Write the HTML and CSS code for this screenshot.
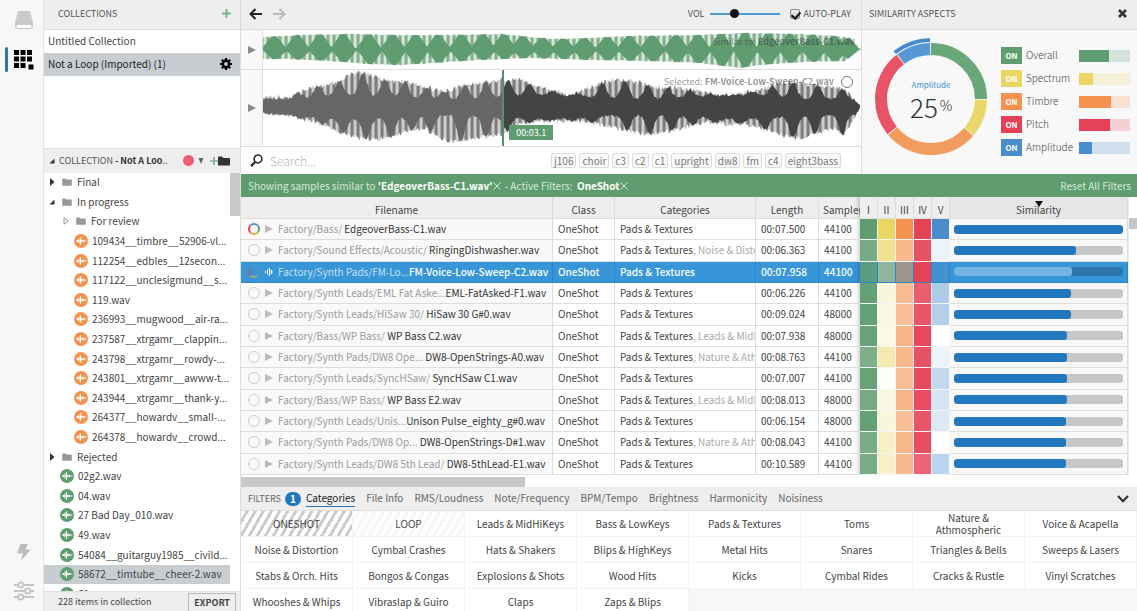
FILE: index.html
```
<!DOCTYPE html>
<html lang="en">
<head>
<meta charset="utf-8">
<title>Sample Browser</title>
<link rel="stylesheet" href="styles.css">
</head>
<body>
<svg class="defs" aria-hidden="true">
  <symbol id="folder" viewBox="0 0 12 10"><path d="M0 1.2Q0 .5.8.5H4L5.2 2H11.2Q12 2 12 2.8V9Q12 9.6 11.2 9.6H.8Q0 9.6 0 9Z"/></symbol>
  <symbol id="wave" viewBox="0 0 14 14"><circle cx="7" cy="7" r="7"/><path d="M2 7H12.4M3.500 6V8M5 4.500V9.500M6.500 3.200V10.800M8 5.500V8.500M9.500 6.200V7.800" stroke="#fff" stroke-width="1" fill="none"/></symbol>
  <symbol id="play" viewBox="0 0 8 8"><path d="M0 0L8 4L0 8Z"/></symbol>
  <symbol id="closed" viewBox="0 0 6 8"><path d="M1 0L5.5 4L1 8Z"/></symbol>
  <symbol id="open" viewBox="0 0 6 6"><path d="M5.5 .5V5.5H.5Z"/></symbol>
  <symbol id="hollow" viewBox="0 0 6 8"><path d="M1 .8L5.2 4L1 7.2Z" fill="none" stroke="#777" stroke-width=".8"/></symbol>
</svg>
<div class="app">
  <nav class="rail" aria-label="Views">
    <div class="rail-group">
      <button class="rail-btn" aria-label="Drive"><svg width="20" height="20" viewBox="0 0 20 20"><path d="M4 1H16L19 13V17Q19 19 17 19H3Q1 19 1 17V13Z" fill="#c9c9c9"/><rect x="2.6" y="15" width="14.8" height="3" rx="1" fill="#fff"/></svg></button>
      <button class="rail-btn active" aria-label="Grid"><svg width="21" height="21" viewBox="0 0 21 21"><path d="M1 1h5v5h-5zM7.500 1h5v5h-5zM14 1h5v5h-5zM1 7.500h5v5h-5zM7.500 7.500h5v5h-5zM14 7.500h5v5h-5zM1 14h5v5h-5zM7.500 14h5v5h-5zM15.500 15.500h5v5h-5z" fill="#000"/></svg></button>
    </div>
    <div class="rail-group">
      <button class="rail-btn" aria-label="Quick actions"><svg width="16" height="18" viewBox="0 0 16 18"><path d="M4.500 1H12L9.500 6.500H15L5 17.500L7 10.500H1Z" fill="#bdbdbd"/></svg></button>
      <button class="rail-btn" aria-label="Settings"><svg width="20" height="20" viewBox="0 0 20 20" fill="none" stroke="#c4c4c4" stroke-width="1.800"><path d="M0 4H4M9.500 4H20M0 10H11M16.500 10H20M0 16H4M9.500 16H20"/><circle cx="6.700" cy="4" r="2.600"/><circle cx="13.700" cy="10" r="2.600"/><circle cx="6.700" cy="16" r="2.600"/></svg></button>
    </div>
  </nav>

  <aside class="sidebar">
    <header class="bar side-head"><h2>COLLECTIONS</h2><button class="plus" aria-label="Add collection"><svg width="9" height="9" viewBox="0 0 9 9"><path d="M4.500 0V9M0 4.500H9" stroke="#7fb08c" stroke-width="2"/></svg></button></header>
    <ul class="collections">
      <li><button>Untitled Collection</button></li>
      <li class="selected"><button>Not a Loop (Imported) (1)</button><svg width="12" height="12" viewBox="0 0 12 12"><circle cx="6" cy="6" r="3.200" fill="none" stroke="#000" stroke-width="2.600"/><path d="M6 0V2.500M6 9.500V12M0 6H2.500M9.500 6H12M1.800 1.800L3.300 3.300M8.700 8.700L10.200 10.200M1.800 10.200L3.300 8.700M8.700 3.300L10.200 1.800" stroke="#000" stroke-width="2.200"/></svg></li>
    </ul>
    <header class="bar coll-head">
      <svg width="6" height="6" fill="#333"><use href="#open"/></svg>
      <h2>COLLECTION <b>- Not A Loo</b>..</h2>
      <span class="dot"></span>
      <svg class="down" width="6" height="6" viewBox="0 0 6 6"><path d="M.5 0H5.500L3 6Z" fill="#666"/></svg>
      <button class="add-folder" aria-label="Add folder"><svg width="8" height="8" viewBox="0 0 9 9"><path d="M4.500 0V9M0 4.500H9" stroke="#7fb08c" stroke-width="1.800"/></svg><svg width="12" height="10" fill="#333"><use href="#folder"/></svg></button>
    </header>
    <div class="tree-wrap">
      <ul class="tree">
        <li class="dir"><svg class="tw"><use href="#closed"/></svg><svg class="fo"><use href="#folder"/></svg><span>Final</span></li>
        <li class="dir"><svg class="tw"><use href="#open"/></svg><svg class="fo"><use href="#folder"/></svg><span>In progress</span></li>
        <li class="dir sub"><svg class="tw"><use href="#hollow"/></svg><svg class="fo"><use href="#folder"/></svg><span>For review</span></li>
        <li class="file sub orange"><svg class="wv"><use href="#wave"/></svg><span>109434__timbre__52906-vl...</span></li>
        <li class="file sub orange"><svg class="wv"><use href="#wave"/></svg><span>112254__edbles__12secon...</span></li>
        <li class="file sub orange"><svg class="wv"><use href="#wave"/></svg><span>117122__unclesigmund__s...</span></li>
        <li class="file sub orange"><svg class="wv"><use href="#wave"/></svg><span>119.wav</span></li>
        <li class="file sub orange"><svg class="wv"><use href="#wave"/></svg><span>236993__mugwood__air-ra...</span></li>
        <li class="file sub orange"><svg class="wv"><use href="#wave"/></svg><span>237587__xtrgamr__clappin...</span></li>
        <li class="file sub orange"><svg class="wv"><use href="#wave"/></svg><span>243798__xtrgamr__rowdy-...</span></li>
        <li class="file sub orange"><svg class="wv"><use href="#wave"/></svg><span>243801__xtrgamr__awww-t...</span></li>
        <li class="file sub orange"><svg class="wv"><use href="#wave"/></svg><span>243944__xtrgamr__thank-y...</span></li>
        <li class="file sub orange"><svg class="wv"><use href="#wave"/></svg><span>264377__howardv__small-...</span></li>
        <li class="file sub orange"><svg class="wv"><use href="#wave"/></svg><span>264378__howardv__crowd...</span></li>
        <li class="dir"><svg class="tw"><use href="#closed"/></svg><svg class="fo"><use href="#folder"/></svg><span>Rejected</span></li>
        <li class="file"><svg class="wv"><use href="#wave"/></svg><span>02g2.wav</span></li>
        <li class="file"><svg class="wv"><use href="#wave"/></svg><span>04.wav</span></li>
        <li class="file"><svg class="wv"><use href="#wave"/></svg><span>27 Bad Day_010.wav</span></li>
        <li class="file"><svg class="wv"><use href="#wave"/></svg><span>49.wav</span></li>
        <li class="file"><svg class="wv"><use href="#wave"/></svg><span>54084__guitarguy1985__civild...</span></li>
        <li class="file selected"><svg class="wv"><use href="#wave"/></svg><span>58672__timtube__cheer-2.wav</span></li>
        <li class="file"><svg class="wv"><use href="#wave"/></svg><span>61.wav</span></li>
      </ul>
      <div class="vthumb"></div>
    </div>
    <footer class="side-foot"><span>228 items in collection</span><button>EXPORT</button></footer>
  </aside>

  <main class="main">
    <div class="top">
      <section class="player">
        <header class="bar player-head">
          <button aria-label="Back"><svg width="13" height="12" viewBox="0 0 13 12" fill="none" stroke="#222" stroke-width="2"><path d="M13 6H2M6.500 1L1.500 6L6.500 11"/></svg></button>
          <button aria-label="Forward"><svg width="13" height="12" viewBox="0 0 13 12" fill="none" stroke="#bbb" stroke-width="2"><path d="M0 6H11M6.500 1L11.500 6L6.500 11"/></svg></button>
          <div class="player-opts">
            <label for="vol">VOL</label><input id="vol" class="vol" type="range" min="0" max="100" value="34">
            <input id="auto" class="check" type="checkbox" checked><label for="auto">AUTO-PLAY</label>
          </div>
        </header>
        <div class="track small">
          <button class="play" aria-label="Play similar"><svg width="8" height="8" fill="#8a8a8a"><use href="#play"/></svg></button>
          <div class="wavebox">
            <svg id="wave-a" class="waveform" viewBox="263 30 598 39" preserveAspectRatio="none"></svg>
            <p class="caption">Similar to: <b>EdgeoverBass-C1.wav</b></p>
          </div>
        </div>
        <div class="track large">
          <button class="play" aria-label="Play selected"><svg width="8" height="8" fill="#8a8a8a"><use href="#play"/></svg></button>
          <div class="wavebox">
            <svg id="wave-b" class="waveform" viewBox="263 70 598 77" preserveAspectRatio="none"></svg>
            <p class="caption">Selected: <b>FM-Voice-Low-Sweep-C2.wav</b><i class="ring"></i></p>
            <div class="playhead" style="left:40%"><span>00:03.1</span></div>
          </div>
        </div>
        <div class="search">
          <svg width="13" height="13" viewBox="0 0 13 13" fill="none" stroke="#333" stroke-width="1.700"><circle cx="8" cy="4.900" r="3.900"/><path d="M5.200 7.900L1 12.200" stroke-width="2.400"/></svg>
          <input type="text" aria-label="Search" placeholder="Search...">
          <div class="tags"><button>j106</button><button>choir</button><button>c3</button><button>c2</button><button>c1</button><button>upright</button><button>dw8</button><button>fm</button><button>c4</button><button>eight3bass</button></div>
        </div>
      </section>
      <section class="aspects">
        <header class="bar aspects-head"><h2>SIMILARITY ASPECTS</h2><button aria-label="Close"><svg width="9" height="9" viewBox="0 0 9 9"><path d="M1 1L8 8M8 1L1 8" stroke="#333" stroke-width="2.600"/></svg></button></header>
        <div class="aspects-body">
          <svg class="donut" viewBox="0 0 126 126">
            <g fill="none" stroke-width="12">
              <circle class="seg" cx="62" cy="63" r="50" stroke="#6aa879" pathLength="360" stroke-dasharray="90 270"/>
              <circle class="seg" cx="62" cy="63" r="50" stroke="#ead76a" pathLength="360" stroke-dasharray="39 321" stroke-dashoffset="-91"/>
              <circle class="seg" cx="62" cy="63" r="50" stroke="#f39c60" pathLength="360" stroke-dasharray="99 261" stroke-dashoffset="-131"/>
              <circle class="seg" cx="62" cy="63" r="50" stroke="#e85367" pathLength="360" stroke-dasharray="91 269" stroke-dashoffset="-231"/>
              <circle class="seg" cx="62" cy="63" r="50" stroke="#5697d6" pathLength="360" stroke-dasharray="36 324" stroke-dashoffset="-323"/>
              <circle class="seg" cx="62" cy="63" r="59" stroke="#478bca" stroke-width="4" pathLength="360" stroke-dasharray="37 323" stroke-dashoffset="-322"/>
            </g>
            <text class="d-name" x="62" y="52" text-anchor="middle">Amplitude</text>
            <text class="d-num" x="41" y="82">25<tspan class="d-pct" dx="2" dy="-7">%</tspan></text>
          </svg>
          <ul class="aspect-list">
            <li class="c1"><button>ON</button><span>Overall</span><div class="meter"><div style="width:59%"></div></div></li>
            <li class="c2"><button>ON</button><span>Spectrum</span><div class="meter"><div style="width:28%"></div></div></li>
            <li class="c3"><button>ON</button><span>Timbre</span><div class="meter"><div style="width:62%"></div></div></li>
            <li class="c4"><button>ON</button><span>Pitch</span><div class="meter"><div style="width:61%"></div></div></li>
            <li class="c5"><button>ON</button><span>Amplitude</span><div class="meter"><div style="width:25%"></div></div></li>
          </ul>
        </div>
      </section>
    </div>

    <div class="status"><p>Showing samples similar to <b>'EdgeoverBass-C1.wav'</b><button aria-label="Clear similarity"><svg width="8" height="8" viewBox="0 0 8 8"><path d="M.5.5L7.500 7.500M7.500.5L.5 7.500"/></svg></button> - Active Filters: &nbsp;<b>OneShot</b><button aria-label="Clear filter"><svg width="8" height="8" viewBox="0 0 8 8"><path d="M.5.5L7.500 7.500M7.500.5L.5 7.500"/></svg></button></p><button>Reset All Filters</button></div>

    <div class="results">
      <div class="table-row">
      <table class="grid">
        <colgroup><col class="w-name"><col class="w-class"><col><col class="w-len"><col class="w-rate"><col class="w-a"><col class="w-a"><col class="w-a"><col class="w-a"><col class="w-a"><col class="w-sim"></colgroup>
        <thead><tr><th>Filename</th><th>Class</th><th>Categories</th><th>Length</th><th class="rate">Sampler</th><th>I</th><th>II</th><th>III</th><th>IV</th><th>V</th><th class="sorted">Similarity<svg width="8" height="6" viewBox="0 0 8 6"><path d="M0 0H8L4 6Z" fill="#111"/></svg></th></tr></thead>
        <tbody>
          <tr><td><div class="name"><i class="ring multi"></i><svg><use href="#play"/></svg><span>Factory/Bass/&nbsp;</span><strong>EdgeoverBass-C1.wav</strong></div></td><td>OneShot</td><td>Pads &amp; Textures</td><td>00:07.500</td><td class="rate">44100</td><td class="h1" style="--v:1"></td><td class="h2" style="--v:1"></td><td class="h3" style="--v:1"></td><td class="h4" style="--v:1"></td><td class="h5" style="--v:1"></td><td class="sim"><div class="score"><div style="width:100%"></div></div></td></tr>
          <tr><td><div class="name"><i class="ring"></i><svg><use href="#play"/></svg><span>Factory/Sound Effects/Acoustic/&nbsp;</span><strong>RingingDishwasher.wav</strong></div></td><td>OneShot</td><td>Pads &amp; Textures<em>, Noise &amp; Distortion</em></td><td>00:06.363</td><td class="rate">44100</td><td class="h1" style="--v:.86"></td><td class="h2" style="--v:.7"></td><td class="h3" style="--v:.66"></td><td class="h4" style="--v:.92"></td><td class="h5" style="--v:.1"></td><td class="sim"><div class="score"><div style="width:72%"></div></div></td></tr>
          <tr class="current"><td><div class="name"><i class="ring multi"></i><svg class="playing" viewBox="0 0 8 8"><path d="M.5 3V5M2.500 1.500V6.500M4.500 0V8M6.500 2V6M8 3.500V4.500" stroke="#fff" stroke-width="1.200"/></svg><span>Factory/Synth Pads/FM-Lo...</span><strong>FM-Voice-Low-Sweep-C2.wav</strong></div></td><td>OneShot</td><td>Pads &amp; Textures</td><td>00:07.958</td><td class="rate">44100</td><td class="h1" style="--v:.85"></td><td class="h2" style="--v:.5"></td><td class="h3" style="--v:.55"></td><td class="h4" style="--v:1"></td><td class="h5" style="--v:.6"></td><td class="sim"><div class="score"><div style="width:70%"></div></div></td></tr>
          <tr><td><div class="name"><i class="ring"></i><svg><use href="#play"/></svg><span>Factory/Synth Leads/EML Fat Aske...</span><strong>EML-FatAsked-F1.wav</strong></div></td><td>OneShot</td><td>Pads &amp; Textures</td><td>00:06.226</td><td class="rate">44100</td><td class="h1" style="--v:.96"></td><td class="h2" style="--v:.22"></td><td class="h3" style="--v:.62"></td><td class="h4" style="--v:.86"></td><td class="h5" style="--v:.45"></td><td class="sim"><div class="score"><div style="width:69%"></div></div></td></tr>
          <tr><td><div class="name"><i class="ring"></i><svg><use href="#play"/></svg><span>Factory/Synth Leads/HiSaw 30/&nbsp;</span><strong>HiSaw 30 G#0.wav</strong></div></td><td>OneShot</td><td>Pads &amp; Textures</td><td>00:09.024</td><td class="rate">48000</td><td class="h1" style="--v:.96"></td><td class="h2" style="--v:.2"></td><td class="h3" style="--v:.58"></td><td class="h4" style="--v:.9"></td><td class="h5" style="--v:.42"></td><td class="sim"><div class="score"><div style="width:69%"></div></div></td></tr>
          <tr><td><div class="name"><i class="ring"></i><svg><use href="#play"/></svg><span>Factory/Bass/WP Bass/&nbsp;</span><strong>WP Bass C2.wav</strong></div></td><td>OneShot</td><td>Pads &amp; Textures<em>, Leads &amp; MidHiKeys</em></td><td>00:07.938</td><td class="rate">48000</td><td class="h1" style="--v:.94"></td><td class="h2" style="--v:.18"></td><td class="h3" style="--v:.68"></td><td class="h4" style="--v:.97"></td><td class="h5" style="--v:0"></td><td class="sim"><div class="score"><div style="width:67%"></div></div></td></tr>
          <tr><td><div class="name"><i class="ring"></i><svg><use href="#play"/></svg><span>Factory/Synth Pads/DW8 Ope...&nbsp;</span><strong>DW8-OpenStrings-A0.wav</strong></div></td><td>OneShot</td><td>Pads &amp; Textures<em>, Nature &amp; Athmospheric</em></td><td>00:08.763</td><td class="rate">44100</td><td class="h1" style="--v:.82"></td><td class="h2" style="--v:.5"></td><td class="h3" style="--v:.66"></td><td class="h4" style="--v:.92"></td><td class="h5" style="--v:.1"></td><td class="sim"><div class="score"><div style="width:67%"></div></div></td></tr>
          <tr><td><div class="name"><i class="ring"></i><svg><use href="#play"/></svg><span>Factory/Synth Leads/SyncHSaw/&nbsp;</span><strong>SyncHSaw C1.wav</strong></div></td><td>OneShot</td><td>Pads &amp; Textures</td><td>00:07.007</td><td class="rate">44100</td><td class="h1" style="--v:.94"></td><td class="h2" style="--v:.03"></td><td class="h3" style="--v:.6"></td><td class="h4" style="--v:.96"></td><td class="h5" style="--v:.34"></td><td class="sim"><div class="score"><div style="width:67%"></div></div></td></tr>
          <tr><td><div class="name"><i class="ring"></i><svg><use href="#play"/></svg><span>Factory/Bass/WP Bass/&nbsp;</span><strong>WP Bass E2.wav</strong></div></td><td>OneShot</td><td>Pads &amp; Textures<em>, Leads &amp; MidHiKeys</em></td><td>00:08.013</td><td class="rate">48000</td><td class="h1" style="--v:.86"></td><td class="h2" style="--v:.2"></td><td class="h3" style="--v:.68"></td><td class="h4" style="--v:.95"></td><td class="h5" style="--v:.24"></td><td class="sim"><div class="score"><div style="width:67%"></div></div></td></tr>
          <tr><td><div class="name"><i class="ring"></i><svg><use href="#play"/></svg><span>Factory/Synth Leads/Unis...</span><strong>Unison Pulse_eighty_g#0.wav</strong></div></td><td>OneShot</td><td>Pads &amp; Textures</td><td>00:06.154</td><td class="rate">48000</td><td class="h1" style="--v:.96"></td><td class="h2" style="--v:.22"></td><td class="h3" style="--v:.58"></td><td class="h4" style="--v:.9"></td><td class="h5" style="--v:.2"></td><td class="sim"><div class="score"><div style="width:66%"></div></div></td></tr>
          <tr><td><div class="name"><i class="ring"></i><svg><use href="#play"/></svg><span>Factory/Synth Pads/DW8 Op...&nbsp;</span><strong>DW8-OpenStrings-D#1.wav</strong></div></td><td>OneShot</td><td>Pads &amp; Textures<em>, Nature &amp; Athmospheric</em></td><td>00:08.043</td><td class="rate">44100</td><td class="h1" style="--v:.84"></td><td class="h2" style="--v:.35"></td><td class="h3" style="--v:.66"></td><td class="h4" style="--v:.95"></td><td class="h5" style="--v:0"></td><td class="sim"><div class="score"><div style="width:66%"></div></div></td></tr>
          <tr><td><div class="name"><i class="ring"></i><svg><use href="#play"/></svg><span>Factory/Synth Leads/DW8 5th Lead/&nbsp;</span><strong>DW8-5thLead-E1.wav</strong></div></td><td>OneShot</td><td>Pads &amp; Textures</td><td>00:10.589</td><td class="rate">44100</td><td class="h1" style="--v:.84"></td><td class="h2" style="--v:.35"></td><td class="h3" style="--v:.64"></td><td class="h4" style="--v:.82"></td><td class="h5" style="--v:.38"></td><td class="sim"><div class="score"><div style="width:66%"></div></div></td></tr>
        </tbody>
      </table>
      <div class="vscroll"><div></div></div>
      </div>
      <div class="hscroll"><div></div></div>
    </div>

    <section class="filters">
      <header class="filter-head"><span>FILTERS</span><span class="badge">1</span>
        <nav><button class="on">Categories</button><button>File Info</button><button>RMS/Loudness</button><button>Note/Frequency</button><button>BPM/Tempo</button><button>Brightness</button><button>Harmonicity</button><button>Noisiness</button></nav>
        <button class="collapse" aria-label="Collapse"><svg width="12" height="8" viewBox="0 0 12 8"><path d="M1 1L6 6.200L11 1" fill="none" stroke="#333" stroke-width="2.200"/></svg></button>
      </header>
      <div class="cells">
        <button class="striped">ONESHOT</button><button class="striped faint">LOOP</button><button>Leads &amp; MidHiKeys</button><button>Bass &amp; LowKeys</button><button>Pads &amp; Textures</button><button>Toms</button><button>Nature &amp; Athmospheric</button><button>Voice &amp; Acapella</button>
        <button>Noise &amp; Distortion</button><button>Cymbal Crashes</button><button>Hats &amp; Shakers</button><button>Blips &amp; HighKeys</button><button>Metal Hits</button><button>Snares</button><button>Triangles &amp; Bells</button><button>Sweeps &amp; Lasers</button>
        <button>Stabs &amp; Orch. Hits</button><button>Bongos &amp; Congas</button><button>Explosions &amp; Shots</button><button>Wood Hits</button><button>Kicks</button><button>Cymbal Rides</button><button>Cracks &amp; Rustle</button><button>Vinyl Scratches</button>
        <button>Whooshes &amp; Whips</button><button>Vibraslap &amp; Guiro</button><button>Claps</button><button>Zaps &amp; Blips</button>
      </div>
    </section>
  </main>
</div>
<script src="waves.js"></script>
</body>
</html>
```
FILE: waves.js
```
// Builds the two waveform drawings from envelope key points and beat peaks.
function lerp(points, x) {
  for (let i = 1; i < points.length; i++) {
    if (x <= points[i][0]) {
      const [x0, y0] = points[i - 1], [x1, y1] = points[i];
      return y0 + (y1 - y0) * (x - x0) / (x1 - x0);
    }
  }
  return points[points.length - 1][1];
}
function noise(x) {
  const s = Math.sin(x * 127.1) * 43758.5453;
  return s - Math.floor(s);
}
function outline(from, to, top, bottom) {
  const up = [], down = [];
  for (let x = from; x <= to; x++) {
    up.push(x + ',' + top(x).toFixed(1));
    down.unshift(x + ',' + bottom(x).toFixed(1));
  }
  return up.concat(down).join(' ');
}
function stripes(id, light, dark, width) {
  return `<linearGradient id="${id}" gradientUnits="userSpaceOnUse" x1="0" x2="${width}" y1="0" y2="0" spreadMethod="repeat"><stop offset="0" stop-color="${light}"/><stop offset=".35" stop-color="${light}"/><stop offset=".5" stop-color="${dark}"/><stop offset=".85" stop-color="${dark}"/><stop offset="1" stop-color="${light}"/></linearGradient>`;
}
function nearest(peaks, x) {
  return Math.min(...peaks.map(p => Math.abs(x - p)));
}

const aTop = [[263,37],[300,35],[350,34],[400,35],[450,35],[500,34],[530,37],[555,39],[590,38],[630,36],[700,35],[740,33],[800,34],[835,36],[850,38],[861,49]];
const aBot = [[263,59],[290,59],[330,61],[370,64],[400,65],[430,63],[480,60],[530,58],[590,60],[650,61],[700,63],[740,68],[760,65],[800,62],[845,61],[861,49]];
const aPeaks = [274,297,320,343,369,393,416,438,461,483,504,523,543,563,584,607,629,652,676,698,721,745,768,790,813,834,850];
const aC = 49.5;
const aLobe = x => Math.min(1, Math.max(.1, 1.25 - nearest(aPeaks, x) / 10.5));
const aEdge = x => (noise(x) - .5) * 1.2;
document.getElementById('wave-a').innerHTML =
  stripes('sa', '#cfecd6', '#8aa892', 6) +
  `<polygon fill="url(#sa)" points="${outline(263, 861, x => lerp(aTop, x) + aEdge(x), x => lerp(aBot, x) + aEdge(x + 9))}"/>` +
  `<polygon fill="#5f9d70" points="${outline(263, 861, x => aC - (aC - lerp(aTop, x)) * aLobe(x), x => aC + (lerp(aBot, x) - aC) * aLobe(x - 1))}"/>`;

const bTop = [[263,98],[290,97],[310,88],[335,83],[350,75],[360,72],[375,76],[390,82],[405,81],[425,87],[444,92],[465,85],[490,82],[502,80],[520,80],[535,86],[553,91],[570,96],[590,88],[605,82],[620,80],[640,83],[660,88],[680,88],[700,92],[720,96],[740,94],[760,90],[780,84],[800,83],[820,86],[840,88],[850,94],[861,107]];
const bBot = [[263,114],[285,115],[300,119],[320,124],[335,131],[350,137],[370,140],[390,139],[405,132],[425,129],[440,139],[455,143],[475,139],[500,136],[520,125],[540,122],[570,122],[590,123],[605,127],[625,131],[645,135],[670,132],[690,127],[710,123],[725,125],[745,125],[760,129],[785,137],[800,139],[820,133],[835,129],[843,137],[850,125],[861,107]];
const bUp = [297,318,339,363,385,405,427,444,465,486,508,530,553,575,602,625,648,668,690,713,733,752,772,793,818,843];
const bDown = [278,300,322,343,366,391,412,430,461,486,508,530,550,572,592,627,650,672,693,715,740,765,793,815,842];
const bC = 107.5;
const bBase = x => Math.min(12, 8 + 4 * Math.sin((x - 263) / 190 * Math.PI) ** 2);
function spike(peaks, env, x) {
  const d = nearest(peaks, x);
  const base = Math.min(env, bBase(x));
  return base + (env - base) * Math.exp(-((d / 5.5) ** 2));
}
const bEdge = x => (noise(x) - .5) * 5;
const inner = (from, to) => outline(from, to,
  x => bC - spike(bUp, bC - lerp(bTop, x), x) + bEdge(x) * .5,
  x => bC + spike(bDown, lerp(bBot, x) - bC, x) + bEdge(x + 7) * .5);
document.getElementById('wave-b').innerHTML =
  stripes('sb', '#cdcdcd', '#7c7c7c', 6) +
  `<polygon fill="url(#sb)" points="${outline(263, 860, x => lerp(bTop, x) + bEdge(x), x => lerp(bBot, x) + bEdge(x + 3))}"/>` +
  `<polygon fill="#666" points="${inner(263, 503)}"/><polygon fill="#444" points="${inner(503, 860)}"/>`;
```
FILE: styles.css
```
* { box-sizing: border-box; }
body { margin: 0; font: 10px/16px "Noto Sans CJK SC", "Open Sans", sans-serif; color: #444; background: #fff; }
button { font: inherit; color: inherit; background: none; border: 0; padding: 0; margin: 0; display: inline-flex; align-items: center; }
ul { list-style: none; margin: 0; padding: 0; }
h2 { font: inherit; margin: 0; white-space: nowrap; }
p { margin: 0; }
svg { flex: none; }
.defs { position: absolute; width: 0; height: 0; }

.app { display: grid; grid-template-columns: 44px 197px 1fr; height: 100vh; overflow: hidden; }
.bar { display: flex; align-items: center; background: #eee; border-bottom: 1px solid #ddd; color: #555; font-size: 9px; }

.rail { background: #f7f7f7; border-right: 1px solid #e6e6e6; display: flex; flex-direction: column; justify-content: space-between; padding: 8px 0; }
.rail-group { display: flex; flex-direction: column; gap: 15px; }
.rail-btn { width: 100%; height: 24px; justify-content: center; padding-left: 4px; }
.rail-btn.active { position: relative; }
.rail-btn.active::before { content: ""; position: absolute; left: 5px; top: 0; width: 3px; height: 25px; border-radius: 2px; background: #2777b8; }

.sidebar { display: flex; flex-direction: column; min-height: 0; border-right: 1px solid #ddd; }
.side-head { height: 30px; padding: 0 9px 2px 14px; justify-content: space-between; }
.collections { height: 118px; }
.collections li { height: 23px; display: flex; align-items: center; justify-content: space-between; padding: 0 8px 1px 4px; }
.collections .selected { background: #c8cdd2; color: #222; }
.coll-head { height: 25px; padding: 0 10px 1px 5px; border-top: 1px solid #ddd; border-bottom: 0; }
.coll-head h2 { margin-left: 4px; flex: 1; }
.coll-head b { color: #333; }
.dot { width: 11px; height: 11px; border-radius: 50%; background: #ef5d73; margin-right: 4px; }
.down { margin-right: 6px; }
.tree-wrap { flex: 1; min-height: 0; overflow: hidden; display: flex; align-items: flex-start; }
.tree { flex: 1; min-width: 0; height: calc(100% + 13px); display: grid; grid-auto-rows: 1fr; }
.tree li { display: flex; align-items: center; padding: 0 0 1px 5px; white-space: nowrap; overflow: hidden; }
.tree .sub { padding-left: 19px; }
.tree .file { padding-left: 16px; }
.tree .file.sub { padding-left: 30px; }
.tree .selected { background: #c8cdd2; }
.tw { width: 6px; height: 8px; fill: #333; margin-right: 7px; }
.fo { width: 10px; height: 8px; fill: #999; margin-right: 5px; }
.wv { width: 14px; height: 14px; fill: #5f9d70; margin-right: 4px; }
.orange .wv { fill: #f3934f; }
.vthumb { width: 10px; height: 43px; background: #c8c8c8; }
.side-foot { height: 20px; background: #eee; border-top: 1px solid #ddd; display: flex; align-items: center; justify-content: space-between; padding: 0 4px 0 14px; font-size: 9px; position: relative; }
.side-foot button { border: 1px solid #bbb; border-bottom: 0; height: 18px; padding: 0 5px; font-weight: bold; align-self: flex-end; }

.main { display: flex; flex-direction: column; min-width: 0; min-height: 0; }
.top { display: grid; grid-template-columns: minmax(0, 1fr) 276px; height: 174px; flex: none; }
.player { display: flex; flex-direction: column; min-width: 0; }
.player-head { height: 30px; padding: 0 10px 2px 8px; gap: 11px; }
.player-opts { margin-left: auto; display: flex; align-items: center; }
.vol { appearance: none; width: 70px; height: 12px; margin: 0 10px 0 5px; background: linear-gradient(#4a9bd6, #4a9bd6) center / 100% 2px no-repeat; }
.vol::-webkit-slider-thumb { appearance: none; width: 9px; height: 9px; border-radius: 50%; background: #111; }
.check { appearance: none; width: 10px; height: 10px; margin: 0 4px 0 0; border: 1px solid #888; border-radius: 2px; background: linear-gradient(#eee, #ccc); position: relative; }
.check:checked::after { content: ""; position: absolute; left: 2px; top: 0; width: 4px; height: 7px; border: solid #111; border-width: 0 2px 2px 0; rotate: 40deg; }
.track { display: flex; border-bottom: 1px solid #ddd; }
.small { height: 40px; }
.large { height: 77px; }
.play { width: 22px; justify-content: center; background: #f8f8f8; border-right: 1px solid #ddd; flex: none; }
.wavebox { flex: 1; position: relative; min-width: 0; }
.waveform { width: 100%; height: 100%; display: block; }
.caption { position: absolute; right: 6px; top: 4px; font-size: 9px; color: rgb(60 60 60 / .55); display: flex; align-items: center; white-space: pre; }
.large .caption { right: 8px; }
.caption .ring { margin-left: 7px; border-color: #777; }
.ring { width: 12px; height: 12px; border: 1px solid #ccc; border-radius: 50%; flex: none; }
.playhead { position: absolute; top: 0; height: 100%; border-left: 2px solid #4f9468; display: flex; align-items: flex-end; padding: 0 0 6px 5px; }
.playhead span { background: #5f9d70; color: #fff; padding: 0 7px; line-height: 15px; font-size: 9px; }
.search { flex: 1; display: flex; align-items: center; padding: 0 20px 0 9px; }
.search input { border: 0; outline: 0; font: 300 12px/20px "Noto Sans CJK SC", sans-serif; padding: 0; margin-left: 7px; flex: 1; min-width: 0; background: none; }
.search input::placeholder { color: #b5b5b5; }
.tags { display: flex; gap: 3px; }
.tags button { border: 1px solid #ddd; border-radius: 2px; background: #fafafa; color: #777; height: 15px; padding: 0 2px; }

.aspects { border-left: 1px solid #ddd; background: #f8f8f8; min-width: 0; }
.aspects-head { height: 30px; padding: 0 10px 2px 7px; justify-content: space-between; }
.aspects-body { display: flex; align-items: flex-start; padding: 6px 7px 0; }
.donut { width: 126px; height: 126px; }
.seg { transform: rotate(-90deg); transform-origin: 62px 63px; }
.d-name { font-size: 8px; fill: #4a90d0; }
.d-num { font-size: 26px; font-weight: 300; fill: #333; }
.d-pct { font-size: 14px; }
.aspect-list { flex: 1; display: grid; gap: 6px; padding: 11px 0 0 6px; }
.aspect-list li { display: grid; grid-template-columns: 21px 57px 51px; align-items: center; height: 17px; font-weight: 300; }
.aspect-list span { padding: 0 0 1px 4px; }
.aspect-list button { height: 17px; justify-content: center; color: #fff; font-weight: bold; font-size: 8px; background: rgb(var(--c)); }
.meter { height: 12px; background: rgb(var(--c) / .22); }
.meter div { height: 100%; background: rgb(var(--c)); }
.c1 { --c: 95 157 112; }
.c2 { --c: 234 214 98; }
.c3 { --c: 243 147 79; }
.c4 { --c: 230 66 87; }
.c5 { --c: 74 141 204; }

.status { height: 23px; flex: none; background: #5f9d70; color: #d5e8da; display: flex; align-items: center; justify-content: space-between; padding: 0 6px 0 7px; }
.status b { color: #fff; }
.status svg { stroke: #d5e8da; fill: none; margin: 0 1px; }

.results { flex: 1; min-height: 0; display: flex; flex-direction: column; }
.table-row { flex: 1; min-height: 0; display: grid; grid-template-columns: minmax(0, 1fr) 9px; padding-bottom: 2px; }
.grid { width: 100%; height: 100%; table-layout: fixed; border-collapse: separate; border-spacing: 0; }
.w-name { width: 312px; }
.w-class { width: 62px; }
.w-len { width: 63px; }
.w-rate { width: 41px; }
.w-a { width: 18px; }
.w-sim { width: 178px; }
.grid th { height: 22px; padding: 4px 0 0; background: #eee; border-right: 1px solid #ddd; border-bottom: 1px solid #ddd; font-weight: normal; overflow: hidden; white-space: nowrap; line-height: 16px; }
.grid th.rate { text-align: left; padding-left: 4px; }
.grid th.sorted { background: #e6e6e6; position: relative; }
.sorted svg { position: absolute; left: 50%; top: 4px; margin-left: -4px; }
.grid td { padding: 0 0 0 5px; height: 21px; line-height: 16px; border-right: 1px solid #ddd; border-bottom: 1px solid #ddd; overflow: hidden; white-space: nowrap; }
.grid td:first-child { background: #f9f9f9; }
.grid .rate { border-right: 0; box-shadow: inset -5px 0 5px -4px rgb(0 0 0 / .25); }
.grid em { font-style: normal; color: #aaa; }
.name { display: flex; align-items: center; color: #999; white-space: nowrap; }
.name .ring { margin: 0 5px 0 2px; }
.name svg { width: 8px; height: 8px; fill: #bbb; margin-right: 5px; }
.name strong { font-weight: normal; color: #333; }
.ring.multi { border: 2px solid; border-color: #5697d6 #5f9d70 #f0b040 #e64257; }
.grid td[style] { padding: 0; border-color: #f5f5f5; background: rgb(var(--h) / var(--v)); background-clip: padding-box; }
.h1 { --h: 95 157 112; }
.h2 { --h: 234 214 98; }
.h3 { --h: 243 147 79; }
.h4 { --h: 230 66 87; }
.h5 { --h: 74 141 204; }
.grid td.sim { background: #f8f8f8; padding: 0 4px; }
.score { height: 9px; border-radius: 3px; background: #c6c6c6; overflow: hidden; }
.score div { height: 100%; border-radius: 3px; background: #2278bf; }
.current { background: #3796d8; color: #fff; }
.grid .current td { border-color: #2f86c6; }
.grid .current td:first-child, .grid .current td.sim { background: #3796d8; }
.current td:not([style]) { font-weight: 500; }
.current .name { color: #c8e0f3; font-weight: normal; }
.current strong { color: #fff; font-weight: 500; }
.current .ring { opacity: .6; }
.current .score { background: #2c76ac; }
.current .score div { background: #74b4e4; }
.vscroll { border-left: 1px solid #eee; padding-top: 21px; background: #fff; }
.vscroll div { height: 11px; background: #c6c6c6; }
.hscroll { height: 10px; flex: none; }
.hscroll div { width: 284px; height: 100%; background: #c8c8c8; }

.filters { flex: none; background: #f7f7f7; }
.filter-head { height: 24px; display: flex; align-items: center; background: #eee; padding: 0 8px 0 7px; border-bottom: 1px solid #ddd; color: #666; }
.filter-head > span:first-child { font-size: 9px; }
.badge { background: #2278bf; color: #fff; font-weight: bold; border-radius: 8px; width: 16px; line-height: 14px; text-align: center; margin: 0 5px 0 4px; }
.filter-head nav { display: flex; gap: 11px; }
.filter-head nav button { border-bottom: 1px solid transparent; }
.filter-head nav .on { color: #222; border-color: #2278bf; }
.collapse { margin-left: auto; }
.cells { display: grid; grid-template-columns: repeat(8, 1fr); grid-auto-rows: 26px; height: 100px; overflow: hidden; }
.cells button { justify-content: center; text-align: center; background: #fff; border: solid #f3f3f3; border-width: 0 1px 1px 0; padding: 0 10px; line-height: 12px; }
.cells .striped { background: repeating-linear-gradient(120deg, #fff 0 4px, #ccc 4px 7px); background-clip: padding-box; }
.cells .faint { background: repeating-linear-gradient(120deg, #fff 0 4px, #f7f7f7 4px 7px); }
```
